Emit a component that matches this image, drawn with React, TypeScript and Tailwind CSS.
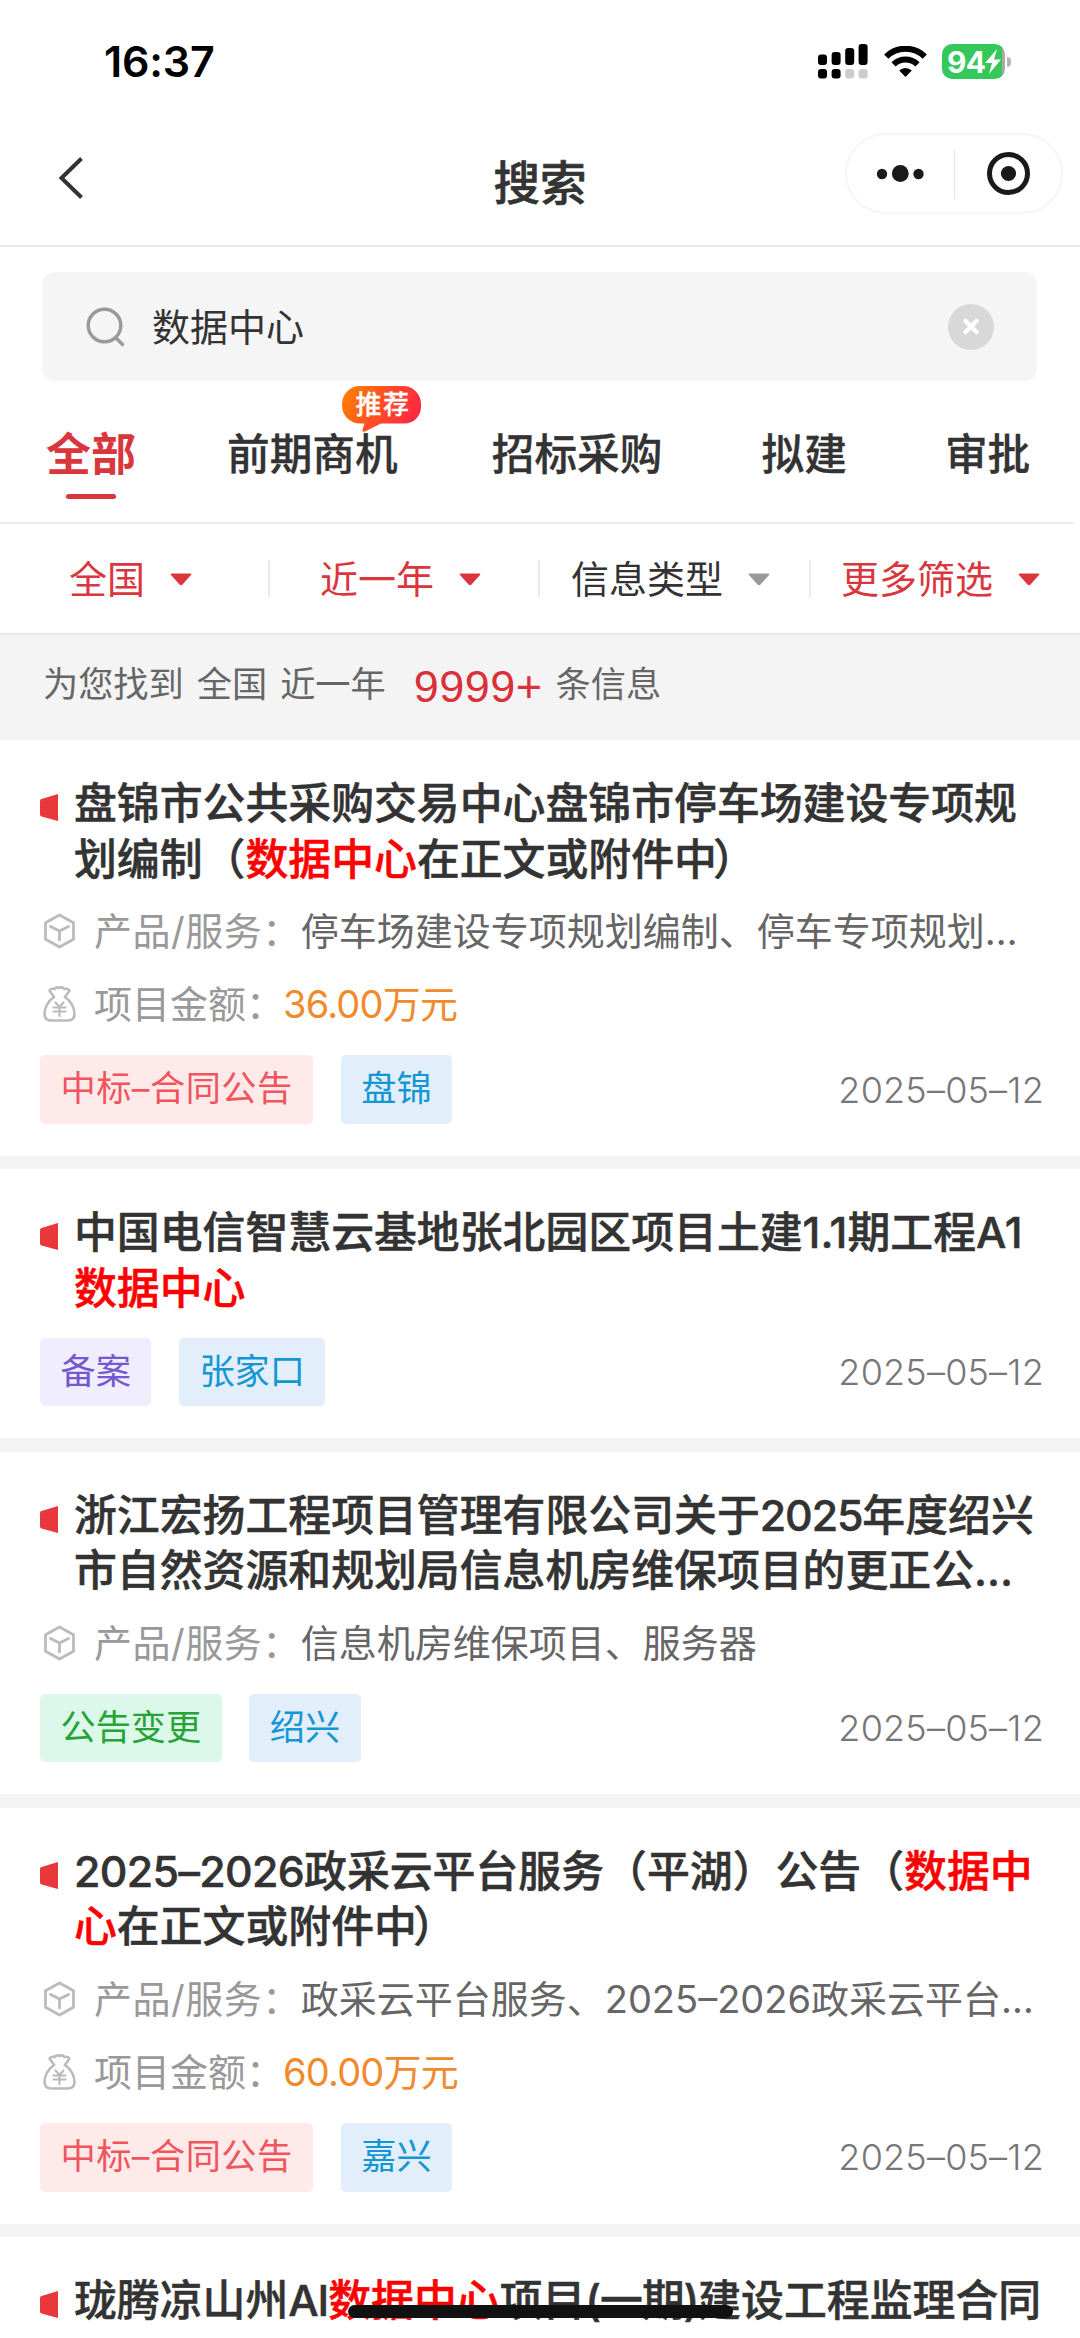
import type { ReactNode } from 'react'
import clsx from 'clsx'

type Segment = { text: string; hit?: boolean; className?: string }

type Result = {
  id: number
  title: Segment[][]
  product?: string
  amount?: string
  type?: string
  typeClass?: string
  city?: string
  date?: string
}

const tabs = [
  { label: '前期商机', className: 'ml-[91px]', recommended: true },
  { label: '招标采购', className: 'ml-[94px]' },
  { label: '拟建', className: 'ml-[99px]' },
  { label: '审批', className: 'ml-[98px]' }
]

const filters = [
  { label: '全国', active: true, className: 'w-[270px] pl-[69px]' },
  { label: '近一年', active: true, className: 'w-[270px] pl-[50px]' },
  { label: '信息类型', active: false, className: 'w-[271px] pl-[31px]' },
  { label: '更多筛选', active: true, className: 'w-[269px] pl-[30px]' }
]

const results: Result[] = [
  {
    id: 1,
    title: [
      [{ text: '盘锦市公共采购交易中心盘锦市停车场建设专项规' }],
      [{ text: '划编制（' }, { text: '数据中心', hit: true }, { text: '在正文或附件中' }, { text: '）', className: 'ml-[-4px]' }]
    ],
    product: '停车场建设专项规划编制、停车专项规划…',
    amount: '36.00万元',
    type: '中标–合同公告',
    typeClass: 'bg-[#ffeaea] text-[#f0545c] tracking-[0.5px]',
    city: '盘锦',
    date: '2025–05–12'
  },
  {
    id: 2,
    title: [
      [{ text: '中国电信智慧云基地张北园区项目土建1.1期工程A1' }],
      [{ text: '数据中心', hit: true }]
    ],
    type: '备案',
    typeClass: 'bg-[#f0edff] text-[#7558d0]',
    city: '张家口',
    date: '2025–05–12'
  },
  {
    id: 3,
    title: [
      [{ text: '浙江宏扬工程项目管理有限公司关于' }, { text: '2025', className: 'tracking-[-1.100px]' }, { text: '年度绍兴' }],
      [{ text: '市自然资源和规划局信息机房维保项目的更正公…' }]
    ],
    product: '信息机房维保项目、服务器',
    type: '公告变更',
    typeClass: 'bg-[#dcf8ea] text-[#27a336]',
    city: '绍兴',
    date: '2025–05–12'
  },
  {
    id: 4,
    title: [
      [
        { text: '2025–2026', className: 'tracking-[-0.650px]' },
        { text: '政采云平台服务（平湖）公告（' },
        { text: '数据中', hit: true }
      ],
      [{ text: '心', hit: true }, { text: '在正文或附件中' }, { text: '）', className: 'ml-[-4px]' }]
    ],
    product: '政采云平台服务、2025–2026政采云平台…',
    amount: '60.00万元',
    type: '中标–合同公告',
    typeClass: 'bg-[#ffeaea] text-[#f0545c] tracking-[0.5px]',
    city: '嘉兴',
    date: '2025–05–12'
  },
  {
    id: 5,
    title: [
      [
        { text: '珑腾凉山州' },
        { text: 'AI', className: 'tracking-[-1.100px]' },
        { text: '数据中心', hit: true },
        { text: '项目' },
        { text: '(一期)', className: 'tracking-[-1.100px]' },
        { text: '建设工程监理合同' }
      ]
    ]
  }
]

export default function App() {
  return (
    <div className="relative h-[2338px] w-[1080px] overflow-hidden bg-white font-['Inter','Noto_Sans_CJK_SC',sans-serif] text-[#333]">
      <StatusBar />
      <NavBar />

      {/* Search */}
      <div className="mt-[25px] mr-[43px] mb-px ml-[42px] flex h-[109px] items-center rounded-[12px] bg-[#f5f5f5] pr-[43px] pl-[44px]">
        <svg className="size-[40px]" viewBox="0 0 40 40" fill="none" stroke="#999" strokeWidth="3.4">
          <circle cx="18.5" cy="18.5" r="16.3" />
          <path d="M30 31l6.5 6.5" strokeLinecap="round" />
        </svg>
        <span className="ml-[26px] flex-1 text-[38px] leading-none">数据中心</span>
        <svg className="size-[46px]" viewBox="0 0 46 46">
          <circle cx="23" cy="23" r="23" fill="#d8d8d8" />
          <path d="M17.500 17l11 11M28.500 17l-11 11" stroke="#fff" strokeWidth="4.500" strokeLinecap="round" />
        </svg>
      </div>

      {/* Tabs */}
      <div className="flex h-[142px] w-[1074px] border-b-2 border-[#ececec] pt-[45px] pl-[46px] whitespace-nowrap">
        <div className="flex w-[90px] flex-col items-center">
          <span className="text-[45px] leading-[56px] font-bold text-[#d9363e]">全部</span>
          <span className="mt-[11px] h-[5px] w-[50px] rounded-full bg-[#d9363e]" />
        </div>
        {tabs.map((tab) => (
          <div
            key={tab.label}
            className={clsx('relative text-[42.700px] leading-[56px] font-medium [-webkit-text-stroke:0.3px_currentColor]', tab.className)}
          >
            {tab.label}
            {tab.recommended && <RecommendBadge />}
          </div>
        ))}
      </div>

      {/* Filters */}
      <div className="flex h-[111px] border-b-2 border-[#e8e8e8]">
        {filters.map((filter, index) => (
          <div
            key={filter.label}
            className={clsx('relative flex items-center', filter.active ? 'text-[#d9363e]' : 'text-[#333]', filter.className)}
          >
            <span className="text-[38px] leading-none">{filter.label}</span>
            <svg className={clsx('mt-[2px] ml-[25px] h-[13px] w-[22px]', !filter.active && 'text-[#999]')} viewBox="0 0 22 13">
              <path d="M1.500.5h19q1.500.3.500 1.500l-8.500 9.600q-1.500 1.400-3 0L1 2Q0 .8 1.500.5z" fill="currentColor" />
            </svg>
            {index < filters.length - 1 && <i className="ml-auto h-[37px] w-[2px] bg-[#ebebeb]" />}
          </div>
        ))}
      </div>

      {/* Summary */}
      <div className="flex h-[105px] items-center bg-[#f4f4f4] pb-[5px] pl-[43px] text-[35.200px] leading-none whitespace-pre text-[#666]">
        <span>为您找到</span>
        <span className="ml-[13px]">全国</span>
        <span className="ml-[13px]">近一年</span>
        <span className="mt-[3px] ml-[28px] font-['Liberation_Sans'] text-[45px] tracking-[0.5px] text-[#d9303a]">9999+</span>
        <span className="ml-[13px]">条信息</span>
      </div>

      {/* Results */}
      <div className="space-y-[13.300px] bg-[#f4f4f4]">
        {results.map((item) => (
          <ResultCard key={item.id} item={item} />
        ))}
      </div>

      {/* Home indicator */}
      <div className="absolute bottom-[20px] left-[348px] h-[13px] w-[385px] rounded-full bg-[#111]" />
    </div>
  )
}

function ResultCard({ item }: { item: Result }) {
  return (
    <div className="bg-white pt-[36px] pr-[36px] pb-[32px] pl-[40px]">
      <div className="flex">
        <svg className="mt-[18px] h-[27px] w-[18px] shrink-0" viewBox="0 0 18 27">
          <path d="M0 7q0-1.500 1.500-2L18 0v27L1.500 22.500Q0 22 0 20.500z" fill="#ea373b" />
        </svg>
        <div className="ml-[16px] text-[42.870px] leading-[55.600px] font-medium whitespace-nowrap [-webkit-text-stroke:0.5px_currentColor]">
          {item.title.map((line, index) => (
            <p key={index}>
              {line.map((segment) => (
                <span key={segment.text} className={clsx(segment.hit && 'text-[#fe0000]', segment.className)}>
                  {segment.text}
                </span>
              ))}
            </p>
          ))}
        </div>
      </div>

      {item.type && (
        <>
          <div className="pt-[7px] pb-[14.500px]">
            {item.product && (
              <InfoRow icon={<BoxIcon />} label="产品/服务：" labelClass="tracking-[0.5px]">
                <span className="text-[#666]">{item.product}</span>
              </InfoRow>
            )}
            {item.amount && (
              <InfoRow icon={<MoneyBagIcon />} label="项目金额：" labelClass="mr-[-1px]">
                <span className="tracking-[-0.800px] text-[#f18a2c]">{item.amount}</span>
              </InfoRow>
            )}
          </div>
          <div className="flex h-[68.500px] items-center text-[35.200px] whitespace-nowrap">
            <span className={clsx('h-full rounded-[5px] px-[20.500px] leading-[66px]', item.typeClass)}>{item.type}</span>
            <span className="ml-[27.500px] h-full rounded-[5px] bg-[#e2eefa] px-[20.500px] leading-[66px] text-[#1496d4]">
              {item.city}
            </span>
            <span className="ml-auto text-[36px] leading-none font-light tracking-[0.200px] text-[#777]">{item.date}</span>
          </div>
        </>
      )}
    </div>
  )
}

function InfoRow({ icon, label, labelClass, children }: { icon: ReactNode; label: string; labelClass: string; children: ReactNode }) {
  return (
    <div className="flex h-[73.400px] items-center pl-[3px] text-[38px] leading-none whitespace-nowrap">
      {icon}
      <span className={clsx('ml-[18px] text-[#999]', labelClass)}>{label}</span>
      {children}
    </div>
  )
}

function RecommendBadge() {
  return (
    <div className="absolute top-[-41px] left-[115px] h-[46px] w-[79px]">
      <svg className="absolute inset-0" width="79" height="46" viewBox="0 0 79 46">
        <defs>
          <linearGradient id="badge" x1="0" x2="1" y1="0" y2="0.3">
            <stop offset="0" stopColor="#ff8500" />
            <stop offset="0.5" stopColor="#ff5420" />
            <stop offset="1" stopColor="#ff2a40" />
          </linearGradient>
        </defs>
        <path
          d="M18 0h43a18 18 0 0 1 18 18v3a16.500 16.500 0 0 1-16.500 16.500H39L23 45.500q-3 1-2.500-2l2-6H18A18 18 0 0 1 0 19.500V18A18 18 0 0 1 18 0z"
          fill="url(#badge)"
        />
      </svg>
      <span className="relative block pl-[3px] text-center text-[26px] leading-[37px] tracking-[1.500px] text-white">推荐</span>
    </div>
  )
}

function StatusBar() {
  return (
    <div className="flex h-[123px] items-center pr-[69px] pl-[104px]">
      <span className="text-[43px] leading-none font-semibold tracking-[-0.200px] text-black">16:37</span>
      {/* Dual SIM signal */}
      <svg className="ml-auto h-[35px] w-[50px]" viewBox="0 0 50 35">
        <rect x="0" y="10.500" width="9" height="10.500" rx="3" />
        <rect x="13.600" y="8" width="9" height="13" rx="3" />
        <rect x="27.200" y="4" width="9" height="17" rx="3" />
        <rect x="40.600" y="0" width="9" height="21" rx="3" />
        <rect x="0" y="25" width="9" height="9.500" rx="3" />
        <rect x="13.600" y="25" width="9" height="9.500" rx="3" />
        <rect x="27.200" y="25" width="9" height="9.500" rx="3" fill="#ccc" />
        <rect x="40.600" y="25" width="9" height="9.500" rx="3" fill="#ccc" />
      </svg>
      <svg className="mb-[1px] ml-[16px] h-[31px] w-[43px]" viewBox="0 0 43 31" fill="none" stroke="#000" strokeWidth="6">
        <path d="M2.200 10.600a27.500 27.500 0 0 1 38.600 0" />
        <path d="M9.500 18.300a17.200 17.200 0 0 1 24 0" />
        <path d="M21.500 31l-6.300-6.400a9 9 0 0 1 12.600 0z" fill="#000" stroke="none" />
      </svg>
      <div className="ml-[15px] flex h-[35px] w-[63px] items-center rounded-[10px] bg-linear-to-r from-[#34c759] from-96% to-[#aaa] to-96% pl-[5px]">
        <span className="text-[30px] leading-none font-bold tracking-[-0.800px] text-white">94</span>
        <svg className="h-[25px] w-[16px] shrink-0" viewBox="0 0 16 25">
          <path d="M12 0L0 14h7L4 25 16 10.500H9z" fill="#fff" />
        </svg>
      </div>
      <i className="ml-[2px] h-[10px] w-[4px] rounded-r-full bg-[#b5b5b5]" />
    </div>
  )
}

function NavBar() {
  return (
    <div className="relative flex h-[124px] justify-center border-b-2 border-[#ebebeb]">
      <svg className="absolute top-[33px] left-[57px]" width="28" height="44" viewBox="0 0 28 44" fill="none" stroke="#333" strokeWidth="4">
        <path d="M24.500 2.500L4.500 22l20 19.500" />
      </svg>
      <h1 className="mt-[32px] text-[46.500px] leading-[56px] font-medium [-webkit-text-stroke:0.6px_currentColor]">搜索</h1>
      <div className="absolute top-[10px] left-[845px] h-[81px] w-[218px] rounded-full border-2 border-[#f6f6f6]">
        <svg width="214" height="77" viewBox="0 0 214 77" fill="#1a1a1a">
          <circle cx="35" cy="39" r="5.200" />
          <circle cx="53.300" cy="38.500" r="8.400" />
          <circle cx="71.500" cy="39" r="5.200" />
          <path d="M107.500 15v49" stroke="#e8e8e8" strokeWidth="1.500" />
          <circle cx="161.500" cy="38.500" r="19" fill="none" stroke="#1a1a1a" strokeWidth="5" />
          <circle cx="161.500" cy="38.500" r="7.600" />
        </svg>
      </div>
    </div>
  )
}

function BoxIcon() {
  return (
    <svg className="h-[36px] w-[33px] shrink-0" viewBox="0 0 33 36" fill="none" stroke="#bbb" strokeWidth="2.800" strokeLinejoin="round" strokeLinecap="round">
      <path d="M16.500 2L30.500 9.800v16.400L16.500 34 2.500 26.200V9.800z" />
      <path d="M7.500 13.500l9 4.500 9-4.500M16.500 18v9" />
    </svg>
  )
}

function MoneyBagIcon() {
  return (
    <svg className="h-[36px] w-[33px] shrink-0" viewBox="0 0 33 36" fill="none" stroke="#bbb" strokeWidth="2.600" strokeLinejoin="round" strokeLinecap="round">
      <path d="M11 11L6.500 4.500q2-2.500 5-1.500 2.500-2.500 5-1 2.500-1.500 5 1 3-1 5 1.500L22 11" />
      <path d="M11 11C5 15 1.500 22 1.500 28q0 6.500 7 6.500h16q7 0 7-6.500c0-6-3.500-13-9.500-17" />
      <path d="M12.500 16.500l4 4.500 4-4.500M10.500 21.500h12M10.500 25.500h12M16.500 21v9" strokeWidth="2.200" />
    </svg>
  )
}
